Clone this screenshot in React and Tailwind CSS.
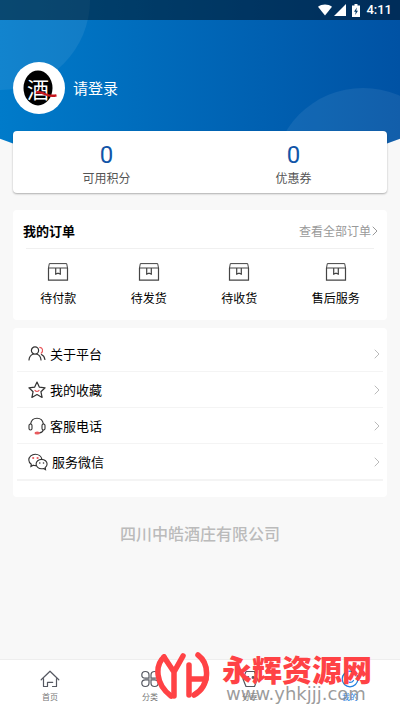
import React from 'react';
import { ChevronRight } from 'lucide-react';

const stats = [
  { label: '可用积分', value: 0 },
  { label: '优惠券', value: 0 },
];

const orders = ['待付款', '待发货', '待收货', '售后服务'];

function BoxIcon() {
  return (
    <svg width="22" height="20" viewBox="0 0 22 20" fill="none" stroke="#444" strokeWidth="1.2">
      <path d="M1.5 6v12.2h19V6" />
      <path d="M1.500 6l.8-4.400h17.400l.8 4.400z" strokeWidth="1" />
      <path d="M8.700 6v6.200l2.300-1 2.300 1V6" />
    </svg>
  );
}

function PeopleIcon() {
  return (
    <svg width="18" height="18" viewBox="0 0 18 18" fill="none" stroke="#333" strokeWidth="1.2" strokeLinecap="round">
      <circle cx="7" cy="5.5" r="3.6" />
      <path d="M1 15c.2-3 2-5.200 4.400-6M8.600 9c2.500.8 4.200 3 4.400 6" />
      <path d="M13.400 9.500c2 .9 3.200 2.700 3.500 5" />
      <path d="M11.800 2.300c2.700.2 3.900 3.600 1.400 5.900" stroke="#e8565a" />
    </svg>
  );
}

function StarIcon() {
  return (
    <svg width="18" height="18" viewBox="0 0 18 18" fill="none" stroke="#333" strokeWidth="1.2" strokeLinejoin="round">
      <path d="M9 1l2.400 5.200 5.700.6-4.200 3.900 1.200 5.700L9 13.500l-5.100 2.900 1.200-5.700L.9 6.800l5.700-.6z" />
      <path d="M7 9.300c1 1.500 3 1.500 4 0" stroke="#e8565a" strokeLinecap="round" />
    </svg>
  );
}

function HeadsetIcon() {
  return (
    <svg width="18" height="18" viewBox="0 0 18 18" fill="none" stroke="#333" strokeWidth="1.1">
      <path d="M2.600 7.200C3.200 3.600 5.700 1.300 9 1.300s5.800 2.300 6.400 5.900" />
      <rect x="1" y="7" width="3" height="6" rx="1.5" />
      <rect x="14" y="7" width="3" height="6" rx="1.5" />
      <path d="M15.300 13c-.5 1.600-1.800 2.600-4 2.900" />
      <ellipse cx="9.2" cy="16" rx="2.2" ry="1" fill="#e8565a" stroke="#e8565a" />
    </svg>
  );
}

function WechatIcon() {
  return (
    <svg width="20" height="18" viewBox="0 0 20 18" fill="none" stroke="#333" strokeWidth="1.1">
      <path d="M8 12.600c-1 .1-2-.1-2.700-.4l-2.400 1.300.4-2.300C1.700 10 .8 8.600.8 6.900c0-3.200 3-5.700 6.500-5.700 3.300 0 6.100 2.100 6.500 5" />
      <path d="M13.600 6.400c-3.100 0-5.500 2.100-5.500 4.700s2.400 4.700 5.500 4.700c.7 0 1.300-.1 1.900-.3l2 1.100-.4-1.900c1.300-.9 2-2.100 2-3.600 0-2.600-2.400-4.700-5.500-4.700z" />
      <g stroke="none">
        <circle cx="5.2" cy="5" r="1.1" fill="#e8565a" />
        <circle cx="9.6" cy="5" r="1.1" fill="#e8565a" />
        <circle cx="11.8" cy="10" r=".8" fill="#333" />
        <circle cx="15.5" cy="10" r=".8" fill="#333" />
      </g>
    </svg>
  );
}

const menu = [
  { label: '关于平台', icon: PeopleIcon },
  { label: '我的收藏', icon: StarIcon },
  { label: '客服电话', icon: HeadsetIcon },
  { label: '服务微信', icon: WechatIcon },
];

function HomeIcon() {
  return (
    <svg width="20" height="18" viewBox="0 0 20 18" fill="none" stroke="#555861" strokeWidth="1.2" strokeLinecap="round" strokeLinejoin="round">
      <path d="M1.200 9.800L10 1.200l8.800 8.600" />
      <path d="M3.500 8.500v8h4v-4.200h5.200M16.500 8.500v8h-4" />
    </svg>
  );
}

function CategoryIcon() {
  return (
    <svg width="20" height="18" viewBox="0 0 20 18" fill="none" stroke="#555861" strokeWidth="1.2">
      <path d="M9 8.200H5.300C3.200 8.200 1.800 6.800 1.800 5s1.400-3.500 3.500-3.500S9 3 9 5z" />
      <path d="M11 8.200h3.700c2.100 0 3.500-1.400 3.500-3.200s-1.400-3.500-3.500-3.500S11 3 11 5z" />
      <path d="M9 9.800H5.300c-2.100 0-3.500 1.400-3.500 3.200s1.400 3.500 3.500 3.500S9 15 9 13z" />
      <path d="M11 9.800h3.700c2.100 0 3.500 1.400 3.500 3.200s-1.400 3.500-3.500 3.500S11 15 11 13z" />
    </svg>
  );
}

function ShareIcon() {
  return (
    <svg width="20" height="18" viewBox="0 0 20 18" fill="none" stroke="#555861" strokeWidth="1.2" strokeLinejoin="round">
      <path d="M6 1.500h8.500L17.500 9l-3 7.500H6L3 9z" />
      <circle cx="8" cy="7.5" r=".8" fill="#555861" />
      <circle cx="13" cy="7.5" r=".8" fill="#555861" />
    </svg>
  );
}

function MineIcon() {
  return (
    <svg width="20" height="18" viewBox="0 0 20 18" fill="none" stroke="#1f7fe0" strokeWidth="1.2">
      <circle cx="10" cy="9" r="7.8" />
      <path d="M6.500 10.500c1.500 2.600 5.500 2.600 7 0" strokeLinecap="round" />
    </svg>
  );
}

const tabs = [
  { label: '首页', icon: HomeIcon },
  { label: '分类', icon: CategoryIcon },
  { label: '分享', icon: ShareIcon },
  { label: '我的', icon: MineIcon, active: true },
];

function StatusBar() {
  return (
    <div className="relative flex h-5 items-center justify-end bg-black/45 pr-2 text-white">
      <svg width="14" height="12" viewBox="0 0 14 12" fill="#fff">
        <path d="M0 2.800C4 -.4 10 -.4 14 2.800L7 11.600z" />
      </svg>
      <svg className="ml-0.5" width="12" height="12" viewBox="0 0 12 12" fill="#fff">
        <path d="M12 0v12H0z" />
      </svg>
      <svg className="ml-1.5" width="8" height="13" viewBox="0 0 8 13">
        <path d="M2.500 0h3v1.500H8V13H0V1.500h2.500z" fill="#fff" />
        <path d="M4.800 3.500L2 7.700h1.700l-.5 3.200L6 6.700H4.300z" fill="#033a68" />
      </svg>
      <span className="ml-1.5 font-[Roboto] text-[13px] font-medium">4:11</span>
    </div>
  );
}

function Avatar() {
  return (
    <div className="relative flex size-[52px] items-center justify-center overflow-hidden rounded-full bg-white">
      <svg className="absolute inset-0" width="52" height="52" viewBox="0 0 52 52">
        <ellipse cx="25" cy="26" rx="14.5" ry="17.5" fill="#000" />
      </svg>
      <span className="relative pr-0.5 text-[22px] leading-6 text-white">酒</span>
      <svg className="absolute inset-0" width="52" height="52" viewBox="0 0 52 52" fill="none">
        <path d="M23 30.500c4-.8 7 .4 10 2 3.500 1.600 6.500 1.700 10.500.8" stroke="#c5161d" strokeWidth="2.4" />
      </svg>
    </div>
  );
}

function Watermark() {
  return (
    <div className="pointer-events-none absolute right-7 bottom-1.5 flex items-center gap-3">
      <svg className="self-start" width="56" height="48" viewBox="0 0 56 48" fill="none" stroke="#ff4245" strokeWidth="5.5" strokeLinecap="round" strokeLinejoin="round">
        <path d="M10 5C1 13 1 32 17 44" />
        <path d="M10 5l10 15L29 4M20 20v24" />
        <path d="M35 13v30M35 27h17" />
        <path d="M44 3c12 9 12 31-4 40" />
      </svg>
      <div>
        <p className="text-[30px] leading-8 font-black text-[#ff4245]">永辉资源网</p>
        <p className="pl-1 font-['DejaVu_Sans'] text-[18px] leading-5 text-[#8a8a8a]/85">www.yhkjjj.com</p>
      </div>
    </div>
  );
}

export default function App() {
  return (
    <div className="relative flex min-h-screen flex-col bg-[#f8f8f8] font-['Noto_Sans_CJK_SC',sans-serif] text-black">
      {/* curved blue backdrop */}
      <div className="absolute inset-x-0 top-0 h-[176px] overflow-hidden bg-linear-to-r from-[#007bca] to-[#0052a4] [clip-path:circle(555px_at_50%_-379px)]">
        <div className="absolute -top-[90px] -left-[90px] size-[180px] rounded-full bg-white/7" />
        <div className="absolute top-[88px] -right-[53px] size-[180px] rounded-full bg-white/7" />
      </div>

      <StatusBar />

      <main className="relative flex-1 px-[13px]">
        <header className="flex h-[111px] items-end gap-2 pb-[17px]">
          <Avatar />
          <button className="h-[52px] text-[15px] text-white">请登录</button>
        </header>

        <section className="flex h-[62px] rounded bg-white shadow-[0_1px_2px_rgba(0,0,0,0.3)]">
          {stats.map((s) => (
            <div key={s.label} className="flex flex-1 flex-col items-center pt-3">
              <span className="font-[Roboto] text-2xl leading-6 text-[#1155a8]">{s.value}</span>
              <span className="pt-px text-xs leading-5 text-[#555]">{s.label}</span>
            </div>
          ))}
        </section>

        <section className="mt-[17px] h-[110px] rounded bg-white">
          <div className="flex h-[38px] items-center justify-between pt-1 pr-2 pl-2.5">
            <h2 className="text-[13px] font-bold">我的订单</h2>
            <a href="#orders" className="flex items-center text-xs text-[#999]">
              查看全部订单
              <ChevronRight className="-mr-1 -ml-1" size={16} strokeWidth={1.5} />
            </a>
          </div>
          <div className="mx-[13px] border-t border-[#f0f0f0]" />
          <div className="flex justify-around pt-[13px]">
            {orders.map((label) => (
              <button key={label} className="flex flex-col items-center gap-1.5">
                <BoxIcon />
                <span className="text-xs leading-5">{label}</span>
              </button>
            ))}
          </div>
        </section>

        <section className="mt-2 rounded bg-white px-1 pt-2 pb-4">
          <ul className="border-b border-[#f4f4f4]">
            {menu.map(({ label, icon: Icon }) => (
              <li key={label} className="border-b border-[#f4f4f4]">
                <button className="flex h-[35px] w-full items-center pr-0.5 pl-[11px] text-left">
                  <Icon />
                  <span className="ml-1 flex-1 text-[13px]">{label}</span>
                  <ChevronRight className="-mr-1 text-[#bbb]" size={16} strokeWidth={1.5} />
                </button>
              </li>
            ))}
          </ul>
        </section>

        <p className="mt-6 text-center text-base leading-6 font-medium text-[#bbb]">四川中皓酒庄有限公司</p>
      </main>

      <nav className="relative flex h-[51px] border-t border-[#eee] bg-white">
        {tabs.map(({ label, icon: Icon, active }) => (
          <button key={label} className={`flex flex-1 flex-col items-center gap-[3px] pt-2.5 ${active ? 'text-[#1f7fe0]' : 'text-[#777]'}`}>
            <Icon />
            <span className="text-[8px] leading-3">{label}</span>
          </button>
        ))}
        <Watermark />
      </nav>
    </div>
  );
}
